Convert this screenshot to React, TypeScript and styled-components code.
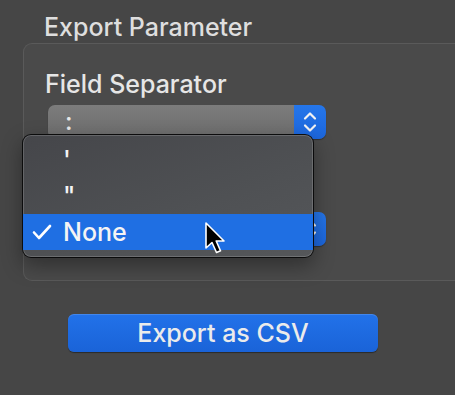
import { createGlobalStyle, styled } from "styled-components";

const GlobalStyle = createGlobalStyle`
  html, body {
    margin: 0;
    padding: 0;
    background: #464646;
    overflow: hidden;
  }
  body {
    font-family: Inter, "Liberation Sans", sans-serif;
    -webkit-font-smoothing: antialiased;
  }
`;

const Window = styled.div`
  position: relative;
  width: 455px;
  height: 395px;
  padding: 12px 0 0 23px;
  box-sizing: border-box;
  overflow: hidden;
`;

const Title = styled.div`
  margin-left: 21px;
  font-size: 25px;
  font-weight: 500;
  line-height: 30px;
  color: #dedede;
`;

// the group box runs on past the right edge of the window
const GroupBox = styled.div`
  margin-top: 1px;
  width: 432px;
  height: 238px;
  box-sizing: border-box;
  padding: 25px 0 0 21px;
  border: 1px solid #5a5a5a;
  border-right: none;
  border-radius: 9px 0 0 9px;
  background: #4a4a4a;
`;

const Label = styled.div`
  font-size: 25px;
  font-weight: 500;
  line-height: 30px;
  color: #e6e6e6;
`;

const Spacer = styled.div<{ $h: number }>`
  height: ${(p) => p.$h}px;
`;

const PopUp = styled.div`
  display: flex;
  margin: 6px 0 0 3px;
  width: 278px;
  height: 34px;
  border-radius: 7px;
  overflow: hidden;
  box-shadow: 0 1px 1px rgba(0, 0, 0, 0.35);
`;

const PopUpValue = styled.div`
  flex: 1;
  padding-left: 17px;
  font-size: 25px;
  font-weight: 500;
  line-height: 32px;
  color: #e8e8e8;
  background: linear-gradient(#7c7c7c, #6c6c6c);
`;

const PopUpArrows = styled.div`
  width: 32px;
  display: flex;
  align-items: center;
  justify-content: center;
  background: linear-gradient(#2576ea, #1c66dc);
`;

const ButtonRow = styled.div`
  margin: 33px 0 0 45px;
`;

const PushButton = styled.button`
  width: 310px;
  height: 38px;
  border: none;
  border-radius: 6px;
  background: linear-gradient(#2272e9, #1a63d8);
  box-shadow: 0 1px 1px rgba(0, 0, 0, 0.4), inset 0 1px 0 rgba(255, 255, 255, 0.15);
  font-family: inherit;
  font-size: 25px;
  font-weight: 500;
  color: #ebebeb;
  padding: 0;
`;

const Menu = styled.div`
  position: absolute;
  left: 22px;
  top: 134px;
  width: 292px;
  height: 124px;
  box-sizing: border-box;
  padding: 7px 0;
  border: 1px solid rgba(0, 0, 0, 0.85);
  border-radius: 9px;
  overflow: hidden;
  background: linear-gradient(160deg, #45464a, #4f5154 60%, #55575a);
  box-shadow: inset 0 0 0 1px rgba(255, 255, 255, 0.16), 0 8px 20px rgba(0, 0, 0, 0.35);
`;

const MenuItem = styled.div<{ $selected?: boolean }>`
  display: flex;
  align-items: center;
  height: 36px;
  font-size: 25px;
  font-weight: 500;
  color: #f4f4f4;
  background: ${(p) => (p.$selected ? "#1f6fe3" : "transparent")};
`;

const Check = styled.span`
  width: 40px;
  flex: none;
  display: flex;
  padding-left: 9px;
  box-sizing: border-box;
`;

const Cursor = styled.svg`
  position: absolute;
  left: 204px;
  top: 221px;
`;

function Chevrons() {
  return (
    <svg width="16" height="24" viewBox="0 0 16 24" fill="none">
      <path d="M3 8.5 L8 3.5 L13 8.5" stroke="#f2f2f2" strokeWidth="2.2" strokeLinecap="round" strokeLinejoin="round" />
      <path d="M3 15.5 L8 20.5 L13 15.5" stroke="#f2f2f2" strokeWidth="2.2" strokeLinecap="round" strokeLinejoin="round" />
    </svg>
  );
}

export default function App() {
  return (
    <>
      <GlobalStyle />
      <Window>
        <Title>Export Parameter</Title>
        <GroupBox>
          <Label>Field Separator</Label>
          <PopUp>
            <PopUpValue>:</PopUpValue>
            <PopUpArrows>
              <Chevrons />
            </PopUpArrows>
          </PopUp>
          {/* row hidden under the open menu */}
          <Spacer $h={67} />
          <PopUp>
            <PopUpValue />
            <PopUpArrows>
              <Chevrons />
            </PopUpArrows>
          </PopUp>
        </GroupBox>
        <ButtonRow>
          <PushButton>Export as CSV</PushButton>
        </ButtonRow>

        <Menu>
          <MenuItem>
            <Check />
            <span>'</span>
          </MenuItem>
          <MenuItem>
            <Check />
            <span>"</span>
          </MenuItem>
          <MenuItem $selected>
            <Check>
              <svg width="20" height="16" viewBox="0 0 20 16" fill="none">
                <path d="M2 8.5 L7 14 L18 2" stroke="#fff" strokeWidth="2.6" strokeLinecap="round" strokeLinejoin="round" />
              </svg>
            </Check>
            <span>None</span>
          </MenuItem>
        </Menu>

        <Cursor width="26" height="36" viewBox="0 0 26 36">
          <path
            d="M2 2 L2 27 L8 21.5 L12.5 31.5 L16.5 29.8 L12.2 20 L20 20 Z"
            fill="#000"
            stroke="#fff"
            strokeWidth="1.6"
            strokeLinejoin="round"
          />
        </Cursor>
      </Window>
    </>
  );
}
